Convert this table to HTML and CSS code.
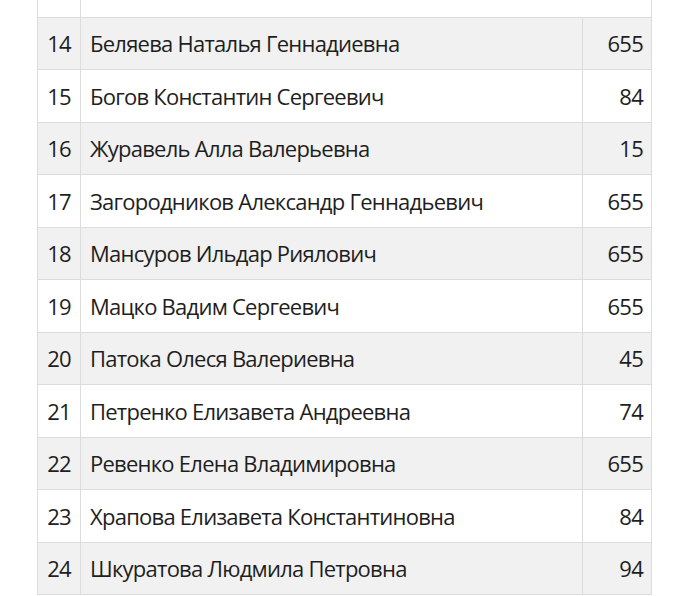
FILE: index.html
```html
<!DOCTYPE html>
<html>
<head>
<meta charset="utf-8">
<link rel="stylesheet" href="styles.css">
</head>
<body>
<table class="list">
  <colgroup><col class="c-num"><col class="c-name"><col class="c-val"></colgroup>
  <tr class="top"><td></td><td colspan="2"></td></tr>
  <tr class="odd"><td class="num">14</td><td class="name">Беляева Наталья Геннадиевна</td><td class="val">655</td></tr>
  <tr><td class="num">15</td><td class="name">Богов Константин Сергеевич</td><td class="val">84</td></tr>
  <tr class="odd"><td class="num">16</td><td class="name">Журавель Алла Валерьевна</td><td class="val">15</td></tr>
  <tr><td class="num">17</td><td class="name">Загородников Александр Геннадьевич</td><td class="val">655</td></tr>
  <tr class="odd"><td class="num">18</td><td class="name">Мансуров Ильдар Риялович</td><td class="val">655</td></tr>
  <tr><td class="num">19</td><td class="name">Мацко Вадим Сергеевич</td><td class="val">655</td></tr>
  <tr class="odd"><td class="num">20</td><td class="name">Патока Олеся Валериевна</td><td class="val">45</td></tr>
  <tr><td class="num">21</td><td class="name">Петренко Елизавета Андреевна</td><td class="val">74</td></tr>
  <tr class="odd"><td class="num">22</td><td class="name">Ревенко Елена Владимировна</td><td class="val">655</td></tr>
  <tr><td class="num">23</td><td class="name">Храпова Елизавета Константиновна</td><td class="val">84</td></tr>
  <tr class="odd"><td class="num">24</td><td class="name">Шкуратова Людмила Петровна</td><td class="val">94</td></tr>
</table>
</body>
</html>
```
FILE: styles.css
```css
html, body {
  margin: 0;
  padding: 0;
  background: #fff;
}
body {
  font-family: "Open Sans", "Noto Sans", sans-serif;
  font-size: 22px;
  letter-spacing: -0.75px;
  color: #1e1e1e;
}
.list {
  margin-left: 37px;
  border-collapse: collapse;
  table-layout: fixed;
  width: 615px;
}
.c-num { width: 43px; }
.c-val { width: 69px; }
.list td {
  border: 1px solid #dcdcdc;
  height: 52.5px;
  padding: 0;
  box-sizing: border-box;
  vertical-align: middle;
  white-space: nowrap;
}
.list tr.top td {
  height: 17px;
  border-top: none;
}
.list tr.odd td {
  background: #f1f1f1;
}
.num { text-align: center; }
.name { padding-left: 9px !important; }
.val { text-align: right; padding-right: 8px !important; }
```
